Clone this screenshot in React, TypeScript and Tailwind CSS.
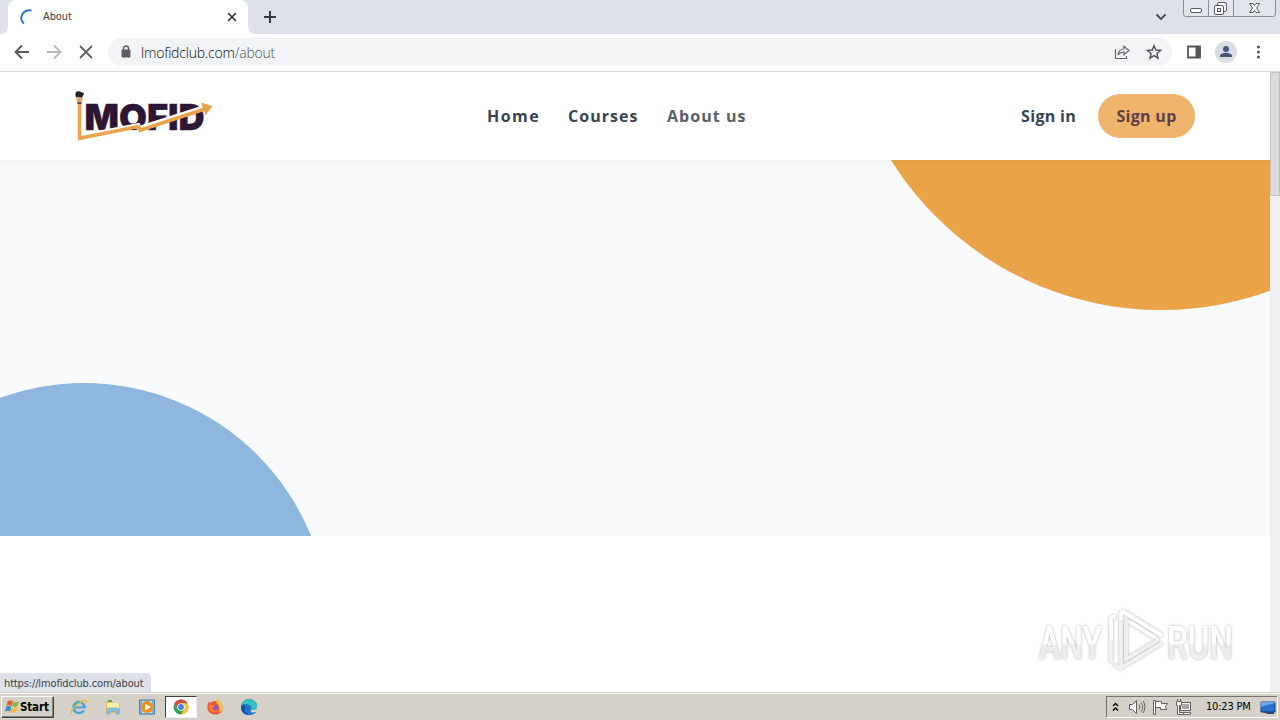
import React from "react";

function WindowTop() {
  return (
    <header className="h-[34px] bg-[#dee1e9] flex pl-2 text-[#3c4043]">
      <div className="relative w-60 h-[34px] bg-white rounded-t-lg flex items-center">
        <svg className="absolute -left-2 bottom-0" width="8" height="8"><path d="M8 0v8H0Q8 8 8 0" fill="#fff" /></svg>
        <svg className="absolute -right-2 bottom-0" width="8" height="8"><path d="M0 0v8h8Q0 8 0 0" fill="#fff" /></svg>
        <svg className="ml-3 shrink-0" width="16" height="16" viewBox="0 0 16 16" fill="none"><path d="M11.500 1.500C5 .5 .5 5 1.400 10.200Q2 13 4 14.500" stroke="#2c74c4" strokeWidth="2" /></svg>
        <span className="ml-[7px] w-[183px] pt-px font-['DejaVu_Sans_Condensed','DejaVu_Sans',sans-serif] text-[11px] tracking-[-0.1px]">About</span>
        <svg width="12" height="12" viewBox="0 0 12 12"><path d="m2 2 8 8m0-8-8 8" stroke="#333" strokeWidth="1.700" /></svg>
      </div>
      <svg className="ml-[15px] mt-[10px]" width="14" height="14"><path d="M1 7h12M7 1v12" stroke="#333943" strokeWidth="2" /></svg>
      <svg className="ml-auto mr-[16px] mt-[12px]" width="12" height="10"><path d="m1.500 2.500 4.500 4.500 4.500-4.500" fill="none" stroke="#454952" strokeWidth="1.800" /></svg>
      <svg className="mr-1" width="93" height="17" viewBox="0 0 93 17" fill="none" stroke="#8b8f99">
        <path d="M.5 0v14q0 2.500 2.500 2.500h87q2.500 0 2.500-2.500V0M25.500 0v16M50.500 0v16" fill="#e2e5ec" />
        <rect x="7.500" y="8.500" width="11" height="4" rx="1.500" stroke="#555b68" fill="#fff" />
        <g stroke="#555b68" fill="#fff"><rect x="34.500" y="2.500" width="9" height="9" rx="1.500" /><rect x="31.500" y="5.500" width="9" height="9" rx="1.500" /><rect x="34.500" y="8.500" width="3" height="3" /></g>
        <path d="M66.500 3.500h3.500l1.500 2 1.500-2h3.500l-3 4.500 3 4.500h-3.500l-1.500-2-1.500 2h-3.500l3-4.500z" stroke="#555b68" fill="#fff" />
      </svg>
    </header>
  );
}

function Toolbar() {
  return (
    <div className="h-[38px] bg-white border-b border-[#d9dadd] flex items-center pb-px text-[#5f6368]">
      <svg className="ml-[14px]" width="16" height="16" fill="none" stroke="#55585c" strokeWidth="1.800"><path d="M15 8H2M8 1.500 1.500 8 8 14.500" /></svg>
      <svg className="ml-4" width="16" height="16" fill="none" stroke="#b6b8ba" strokeWidth="1.800"><path d="M1 8h13M8 1.500 14.500 8 8 14.500" /></svg>
      <svg className="ml-4" width="16" height="16" fill="none" stroke="#606266" strokeWidth="1.800"><path d="m2 2 12 12m0-12L2 14" /></svg>
      <div className="ml-[14px] w-[1064px] h-7 rounded-full bg-[#f1f3f4] flex items-center">
        <svg className="ml-[13px] mb-px" width="10" height="13" viewBox="0 0 10 13"><path d="M2.500 5V3.500a2.500 2.500 0 0 1 5 0V5" fill="none" stroke="#5a5d61" strokeWidth="1.500" /><rect y="4.500" x=".5" width="9" height="8" rx="1" fill="#5a5d61" /></svg>
        <span className="ml-[10px] font-['Open_Sans','Noto_Sans',sans-serif] font-light text-[14px] tracking-[-0.2px] whitespace-nowrap text-[#0b0e12]">lmofidclub.com<span className="text-[#505459]">/about</span></span>
        <svg className="ml-auto" width="16" height="16" fill="none" stroke="#65686d" strokeWidth="1.200"><path d="M1.500 5v9.500h11V12M4 11c.5-4 3-6 6-6V2.200l5 4.300-5 4.300V8Q6 8 4 11z" /></svg>
        <svg className="ml-4 mr-[10px]" width="16" height="16" fill="none" stroke="#55585d" strokeWidth="1.500"><path d="m8 1.800 1.800 4.300 4.700.4-3.600 3 1.100 4.600L8 11.600l-4 2.500 1.100-4.600-3.600-3 4.700-.4z" /></svg>
      </div>
      <svg className="ml-[14px]" width="16" height="16"><path d="M2 2.500h12v11H2z" fill="none" stroke="#56585d" strokeWidth="1.800" /><path d="M9.500 2h5v12h-5z" fill="#56585d" /></svg>
      <svg className="ml-[13px]" width="22" height="22"><circle cx="11" cy="11" r="11" fill="#dadde3" /><circle cx="11" cy="8" r="3" fill="#4a5678" /><path d="M5 16v-1.200c0-2 4-3 6-3s6 1 6 3V16z" fill="#4a5678" /></svg>
      <svg className="ml-[19px]" width="5" height="16" fill="#5a5d61"><circle cx="2.500" cy="3" r="1.600" /><circle cx="2.500" cy="8" r="1.600" /><circle cx="2.500" cy="13" r="1.600" /></svg>
    </div>
  );
}

function MofidLogo() {
  return (
    <svg width="140" height="54" viewBox="73 89 140 54">
      <text x="84.500" y="130" textLength="120" lengthAdjust="spacingAndGlyphs" fill="#2e1635" stroke="#2e1635" strokeWidth=".4" className="font-['Inter',sans-serif] font-black text-[36px]">MOFID</text>
      <path d="m79 137 59-11.500 1.500 3 64-20.500" fill="none" stroke="#fff" strokeWidth="5" />
      <path d="M79.500 103v35.300l59-11.700 1.500 3.700 64-21" fill="none" stroke="#eaa34d" strokeWidth="3.600" />
      <path d="m201 102.500 11.500 3.500-7 9.500z" fill="#eaa34d" />
      <path d="M76.500 96h6v4l-1.200 3h-3.600l-1.200-3z" fill="#eaa56a" />
      <path d="m75.500 92.500 2.500-1.500 6 2-.5 2-1.500 2.500-5-.8-.5.800-1-1z" fill="#28202a" />
      <path d="M77.500 103h4" stroke="#3b2630" strokeWidth="1.500" />
    </svg>
  );
}

function SiteHeader() {
  return (
    <nav className="h-[88px] bg-white flex items-center pl-[73px] pr-[75px] font-['Open_Sans','Noto_Sans',sans-serif] font-bold text-[16px] text-[#394452] whitespace-nowrap">
      <MofidLogo />
      <div className="ml-[274px] flex tracking-[1.05px]">
        <a className="w-[81px] tracking-[1.45px]">Home</a>
        <a className="w-[99px]">Courses</a>
        <a className="text-[#58606a]">About us</a>
      </div>
      <a className="ml-auto tracking-[0.3px]">Sign in</a>
      <a className="ml-[22px] w-[97px] h-11 rounded-full bg-[#f0b36b] text-[#5b414c] flex items-center justify-center tracking-[0.3px]">Sign up</a>
    </nav>
  );
}

function Watermark() {
  return (
    <svg className="absolute right-0 bottom-[16px]" width="248" height="70" viewBox="1022 606 248 70" fill="none">
      <defs>
        <linearGradient id="fade" x1="0" y1="0" x2="0" y2="1"><stop offset=".5" stopColor="#fff" /><stop offset=".56" stopColor="#ededed" /></linearGradient>
        <filter id="glow" x="-10%" y="-20%" width="120%" height="140%"><feDropShadow dx="0" dy="0" stdDeviation="1.600" floodColor="#777" floodOpacity=".6" /></filter>
      </defs>
      <g filter="url(#glow)">
        <g fill="url(#fade)" className="font-['Roboto','Liberation_Sans',sans-serif] text-[47px] font-medium">
          <text x="1039" y="659" textLength="63" lengthAdjust="spacingAndGlyphs">ANY</text>
          <text x="1167" y="659" textLength="66" lengthAdjust="spacingAndGlyphs">RUN</text>
        </g>
        <path d="M1115 617q-4-1-4 3v43M1162 643l-38 23q-3 2-3-2v-50q0-4 4-2l37 23M1126 659v-35q0-4 4-2l25 15q4 3 0 5l-30 18M1122 669l-8-4" stroke="#f1f1f1" strokeWidth="3.500" />
        <path d="M1121 620v-6q0-3 4-1l37 23M1130 622l24 15M1111 640v-20q0-4 4-3" stroke="#fff" strokeWidth="3.500" />
      </g>
    </svg>
  );
}

function Page() {
  return (
    <div className="h-[620px] flex">
      <main className="relative w-[1270px] bg-white">
        <SiteHeader />
        <section className="relative h-[376px] overflow-hidden bg-[#f8fafc]">
          <div className="absolute left-[843px] -top-[486px] size-[636px] rounded-full bg-[#eba347]" />
          <div className="absolute -left-[161px] top-[223px] size-[490px] rounded-full bg-[#8fb7de]" />
          <div className="absolute inset-x-0 top-0 h-2 bg-gradient-to-b from-black/2 to-transparent" />
        </section>
        <Watermark />
        <div className="absolute left-0 bottom-0 h-[19px] w-[151px] rounded-tr bg-[#dee1e9] pl-1 text-[#3c4043] font-['DejaVu_Sans_Condensed','DejaVu_Sans',sans-serif] text-[11px] leading-[21px] tracking-[-0.14px] whitespace-nowrap">https://lmofidclub.com/about</div>
      </main>
      <div className="w-[10px] bg-[#efefef]"><div className="h-[124px] bg-[#dcdcdc] border border-[#c3c3c3]" /></div>
    </div>
  );
}

function Edge() {
  return <svg width="18" height="18" viewBox="-0.500 -0.500 19 19"><path d="M9 .5c5 0 8.500 4 8.500 7.500 0 4-4 5-6.500 3.500-1 3 2 4.500 5.500 2.500-2 3-5 3.500-7.500 3.500C3 17.500.5 13 .5 9S4 .5 9 .5" fill="#1976c9" /><path d="M1 8C2 2 6 .5 9 .5c5 0 8.500 4 8.500 7.500 0 4-4 5-6.500 3.500 1-1 1-4-2-5C6 5 2 6 1 8z" fill="#39bfc2" /><path d="M5 8c-2 4 0 8 5 9.500-6 .5-10-4-9-9 1-1 3-2 4-.5" fill="#174c98" /></svg>;
}

function Taskbar() {
  return (
    <footer className="h-7 bg-[#d5d0c8] border-t border-[#d5d0c8] flex items-center shadow-[inset_0_1px_0_#fff] text-black">
      <div className="ml-px mt-px w-[53px] h-[22px] bg-[#d5d0c8] border border-t-white border-l-white border-r-[#404040] border-b-[#404040] shadow-[inset_-1px_-1px_0_#808080] flex items-center pl-[2px]">
        <svg width="16" height="16" viewBox="0 0 17 16"><path d="M4 2q3-2 5.500 0L8 7Q5 5.500 2.500 7z" fill="#e35b30" /><path d="M10 2.500q3 1.500 6-.5l-1.500 5q-3 1.500-6 .5z" fill="#83b944" /><path d="M2.200 8q3-2 5.500 0L6.500 13Q4 11 1 13z" fill="#388dce" /><path d="M8.300 8.500q3 1.500 6-.5L13 13q-3 2-6 .5z" fill="#f5ba37" /></svg>
        <span className="pt-px font-['DejaVu_Sans_Condensed','DejaVu_Sans',sans-serif] font-bold text-[11.5px] tracking-[-0.15px]">Start</span>
      </div>
      <svg className="ml-[16px]" width="18" height="18" viewBox="0 0 18 18" fill="none"><circle cx="9" cy="9.500" r="5.500" stroke="#45a7df" strokeWidth="2.700" /><path d="M4 9.500h11" stroke="#45a7df" strokeWidth="2.200" /><path d="M12 11.500h5" stroke="#d5d0c8" strokeWidth="2" /><path d="M2 16c-3-2 4-10 11-13 4-2 4 0 3 2" stroke="#e8bb35" strokeWidth="1.500" /></svg>
      <svg className="ml-[16px]" width="18" height="18" viewBox="0 0 18 18"><path d="M2 3h6l1 2h7v10H2z" fill="#e3bf5a" /><path d="M3 5h12v6H3z" fill="#fff0a6" /><path d="M4 2h4v2H4z" fill="#55ac67" /><path d="M3 16v-4q0-2 2-2h8q2 0 2 2v4h-3v-3H6v3z" fill="#87c8e8" stroke="#5aa1ca" strokeWidth=".7" /></svg>
      <svg className="ml-[16px]" width="18" height="18" viewBox="0 0 18 18"><rect x="1.500" y="2" width="15" height="14" fill="#79b4df" stroke="#4e7da5" /><rect x="4" y="3" width="10" height="12" fill="#c5e1f4" /><circle cx="9" cy="9" r="6" fill="#ef8d1d" /><path d="m7 5.500 6 3.500-6 3.500z" fill="#fff" /></svg>
      <div className="ml-[9px] mt-px w-[32px] h-[22px] bg-white border border-t-[#404040] border-l-[#404040] border-r-[#eee] border-b-[#eee] flex items-center justify-center">
        <svg width="16" height="16" viewBox="0 0 16 16"><circle cx="8" cy="8" r="7.500" fill="#34a353" /><path d="M8 8 1.500 4.250A7.500 7.500 0 0 1 14.500 4.250H8z" fill="#de4638" /><path d="M8 4.250h6.500A7.500 7.500 0 0 1 8 15.500l3.250-5.600z" fill="#f8c52c" /><path d="M1.500 4.250 4.750 10 8 8z" fill="#de4638" /><circle cx="8" cy="8" r="3.800" fill="#fff" /><circle cx="8" cy="8" r="2.900" fill="#407fe3" /></svg>
      </div>
      <svg className="ml-[9px]" width="18" height="18" viewBox="-0.500 -0.500 19 19"><path d="M9 3c2 0 2-2 2-2 3 2 6 5 6 9 0 5-4 7-8 7s-8-3-8-8c0-3 1-4 2-6l1 2c2-2 3-2 5-2z" fill="#f5533b" /><path d="M11 1c3 2 6 5 6 9q-1 4-4 5 2-5-1-9-3-2-1-5z" fill="#ffc43b" /><circle cx="9" cy="10" r="3.500" fill="#8755c4" /><path d="M3 7c2-1 4 0 6 1l-2 2c0 3 4 3 6 1-1 5-8 5-10 0z" fill="#ff7b2f" /></svg>
      <div className="ml-[16px]"><Edge /></div>
      <div className="ml-auto mr-[2px] w-[172px] h-[22px] border border-t-[#77736d] border-l-[#77736d] border-r-white border-b-white flex items-center whitespace-nowrap">
        <svg className="ml-[5px]" width="7" height="10" fill="none" stroke="#000" strokeWidth="1.400"><path d="m1 4 2.500-2.500L6 4M1 8.500 3.500 6 6 8.500" /></svg>
        <svg className="ml-[9px]" width="18" height="16" fill="none" stroke="#66625d"><path d="M1.500 5.500h3l4-4v13l-4-4h-3z" fill="#fff" /><path d="M11 5.500q2 2.500 0 5M13 3.500q3.500 4.500 0 9M15 2q4 6 0 12" /></svg>
        <svg className="ml-[6px]" width="17" height="16" fill="#fff" stroke="#66625d"><path d="M1.500 1.500h2v14h-2zM3.500 2.500h6v2h6l-2 3 1 3h-6v-2h-5z" /></svg>
        <svg className="ml-[6px]" width="18" height="16" fill="#fff" stroke="#66625d"><rect x="5.500" y="3.500" width="10" height="8" /><path d="M7 5h7v5H7z" fill="#aaa" stroke="none" /><path d="M8.500 13.500h7v2h-7zM1.500 2.500h5v4h-2v7h4v2h-6v-9h-1zM2.500 0v3M5.500 0v3" /></svg>
        <span className="ml-[13px] w-[47px] pt-[2px] font-['DejaVu_Sans_Condensed','DejaVu_Sans',sans-serif] text-[11px] tracking-[-0.2px]">10:23 PM</span>
        <svg className="ml-[7px]" width="16" height="14"><path d="M1 2h14v10H1z" fill="#2870ca" stroke="#173f83" /><path d="m1 7 14-4V2H1z" fill="#65a6e8" /><path d="M2 12h12v2H8z" fill="#29446b" /></svg>
      </div>
    </footer>
  );
}

export default function App() {
  return <div className="w-[1280px] h-[720px] overflow-hidden bg-white"><WindowTop /><Toolbar /><Page /><Taskbar /></div>;
}
